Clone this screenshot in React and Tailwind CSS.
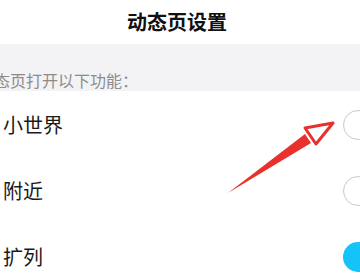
const rows = [
  { label: "小世界", on: false },
  { label: "附近", on: false },
  { label: "扩列", on: true },
];

const font = { fontFamily: '"Noto Sans CJK SC", "Noto Sans", sans-serif' };

export default function App() {
  return (
    <div className="relative w-[360px] h-[280px] overflow-hidden bg-white" style={font}>
      {/* Header */}
      <div className="h-[44px] flex items-center justify-center pr-[6px]">
        <h1 className="text-[20px] font-bold text-[#111] leading-none">动态页设置</h1>
      </div>

      {/* Section label */}
      <div className="h-[47px] bg-[#f3f3f5] flex items-end pb-[1px]">
        <span className="ml-[-6px] text-[16px] leading-[20px] text-[#8c8c8c]">态页打开以下功能：</span>
      </div>

      {/* Options */}
      <div className="pt-[1px]">
        {rows.map((row) => (
          <div key={row.label} className="h-[66px] flex items-center justify-between pl-[3px]">
            <span className="text-[20px] leading-none text-[#1a1a1a]">{row.label}</span>
            <div
              className={
                row.on
                  ? "w-[30px] h-[30px] shrink-0 rounded-full bg-[#14c3f7] mr-[-13px]"
                  : "w-[30px] h-[30px] shrink-0 rounded-full border-[1.5px] border-[#c9c9c9] mr-[-13px]"
              }
            />
          </div>
        ))}
      </div>

      {/* Red arrow annotation */}
      <svg className="absolute inset-0 pointer-events-none" width="360" height="280" viewBox="0 0 360 280">
        <polygon points="228,193 305,134 311,143" fill="#e8312c" />
        <polygon
          points="305,128 333,123 316,144"
          fill="white"
          stroke="#e8312c"
          strokeWidth="3"
          strokeLinejoin="round"
        />
      </svg>
    </div>
  );
}
